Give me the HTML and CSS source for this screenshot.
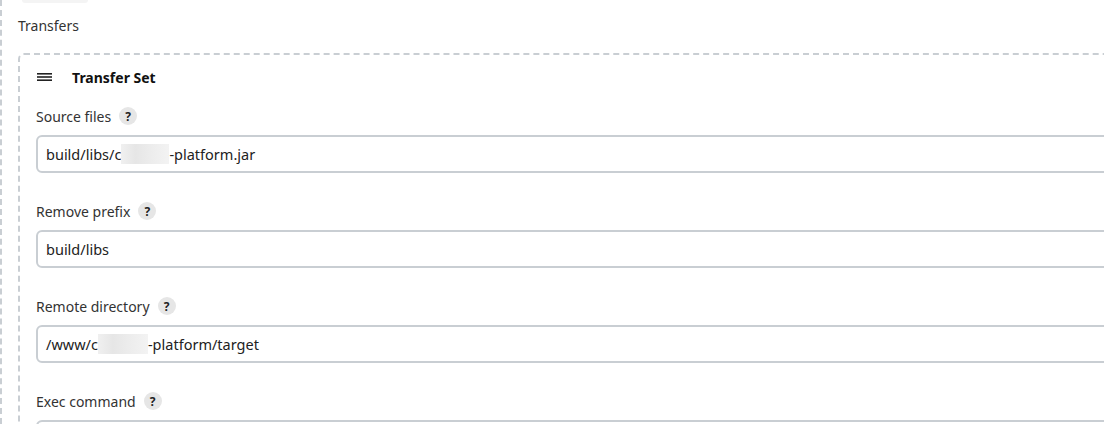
FILE: index.html
```html
<!DOCTYPE html>
<html>
<head>
<meta charset="utf-8">
<link rel="stylesheet" href="styles.css">
</head>
<body>
<div class="outer">
  <div class="top-pill"></div>
  <div class="section-label">Transfers</div>
  <div class="repeat">
    <div class="repeat-head">
      <svg class="handle" width="16" height="10" viewBox="0 0 16 10"><rect x="0" y="1" width="15" height="1.6" fill="#222"/><rect x="0" y="4.2" width="15" height="1.6" fill="#222"/><rect x="0" y="7.4" width="15" height="1.6" fill="#222"/></svg>
      <span class="repeat-title">Transfer Set</span>
    </div>
    <div class="field">
      <div class="label">Source files <span class="help">?</span></div>
      <div class="input">build/libs/c<span class="blur w1"></span>-platform.jar</div>
    </div>
    <div class="field">
      <div class="label">Remove prefix <span class="help">?</span></div>
      <div class="input">build/libs</div>
    </div>
    <div class="field">
      <div class="label">Remote directory <span class="help">?</span></div>
      <div class="input">/www/c<span class="blur w2"></span>-platform/target</div>
    </div>
    <div class="field">
      <div class="label">Exec command <span class="help">?</span></div>
      <div class="input"></div>
    </div>
  </div>
</div>
</body>
</html>
```
FILE: styles.css
```css
html, body {
  margin: 0;
  padding: 0;
  width: 1104px;
  height: 424px;
  overflow: hidden;
  background: #fff;
}
body {
  font-family: "Segoe UI", "Noto Sans", "Liberation Sans", sans-serif;
  font-size: 14px;
  color: #333;
}
.outer {
  border-left: 2px dashed #c9ced3;
  padding-left: 16px;
  height: 424px;
  box-sizing: border-box;
}
.top-pill {
  margin-left: 4px;
  width: 66px;
  height: 3px;
  background: #f4f4f4;
  border-radius: 0 0 6px 6px;
}
.section-label {
  margin-top: 13px;
  height: 20px;
  line-height: 20px;
}
.repeat {
  margin-top: 17px;
  width: 1200px;
  border: 2px dashed #c9ced3;
  border-radius: 6px;
  padding: 12px 0 0 16px;
}
.repeat-head {
  display: flex;
  align-items: center;
  height: 20px;
}
.handle {
  margin-left: 1px;
  margin-right: 19px;
}
.repeat-title {
  font-weight: bold;
  color: #111;
}
.field {
  margin-top: 19px;
}
.field + .field {
  margin-top: 28px;
}
.label {
  display: flex;
  align-items: center;
  height: 20px;
  color: #333;
}
.help {
  display: inline-flex;
  align-items: center;
  justify-content: center;
  width: 18px;
  height: 18px;
  border-radius: 50%;
  background: #e6e6e6;
  color: #222;
  font-size: 12px;
  font-weight: bold;
  margin-left: 8px;
}
.input {
  margin-top: 9px;
  height: 38px;
  box-sizing: border-box;
  border: 2px solid #c9ced3;
  border-radius: 6px;
  padding: 0 8px;
  display: flex;
  align-items: center;
  color: #222;
  font-size: 14.5px;
}
.blur {
  display: inline-block;
  height: 20px;
  background: linear-gradient(90deg, #f0f0f0, #e6e6e6 30%, #ececec 60%, #f3f3f3);
}
.w1 { width: 48px; }
.w2 { width: 50px; }
```
